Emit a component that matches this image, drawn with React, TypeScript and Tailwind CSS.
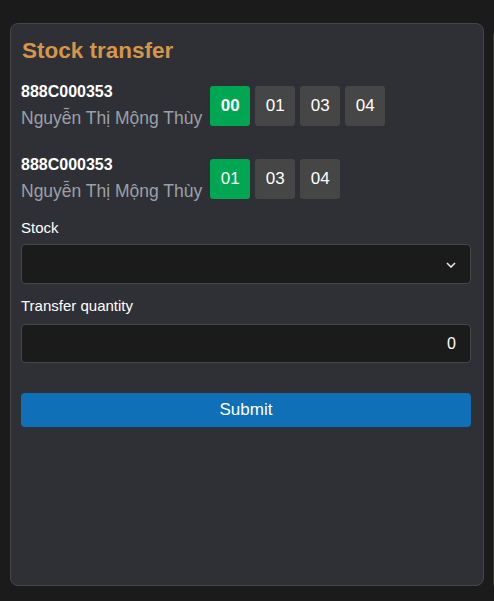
import { useState } from 'react';

type Account = {
  id: string;
  name: string;
  subs: string[];
  bold?: boolean;
};

const accounts: Account[] = [
  { id: '888C000353', name: 'Nguyễn Thị Mộng Thùy', subs: ['00', '01', '03', '04'], bold: true },
  { id: '888C000353', name: 'Nguyễn Thị Mộng Thùy', subs: ['01', '03', '04'] },
];

function AccountRow({ account }: { account: Account }) {
  const [active, setActive] = useState(account.subs[0]);

  return (
    <div className="flex items-center">
      <div className="flex flex-col">
        <div className="text-[16px] leading-[20px] font-bold text-white">{account.id}</div>
        <div className="mt-[4px] text-[17.5px] leading-[24px] text-[#9ba0a8]">{account.name}</div>
      </div>
      <div className="ml-[8px] flex gap-[5px]">
        {account.subs.map((s) => (
          <button
            key={s}
            onClick={() => setActive(s)}
            className={`h-[40px] w-[40px] rounded-[3px] text-[17px] text-white ${
              s === active ? 'bg-[#00a651]' : 'bg-[#464646]'
            } ${s === active && account.bold ? 'font-bold' : ''}`}
          >
            {s}
          </button>
        ))}
      </div>
    </div>
  );
}

export default function App() {
  const [qty, setQty] = useState('0');

  return (
    <div
      className="flex min-h-screen overflow-hidden bg-[#1b1b1b] pl-[10px] pt-[23px]"
      style={{ fontFamily: '"Liberation Sans", Arial, sans-serif' }}
    >
      {/* Panel */}
      <div className="flex h-[563px] w-[474px] shrink-0 flex-col rounded-[8px] border border-[#45464b] bg-[#2f3035] pl-[10px] pr-[12px] pt-[13px]">
        <h2 className="pl-px text-[22.5px] leading-[28px] font-bold text-[#d4964b]">Stock transfer</h2>

        <div className="mt-[17px] flex flex-col gap-[25px]">
          {accounts.map((a, i) => (
            <AccountRow key={i} account={a} />
          ))}
        </div>

        <label className="mt-[15px] text-[15px] leading-[20px] text-white">Stock</label>
        <div className="relative mt-[6px]">
          <select className="h-[40px] w-full appearance-none rounded-[4px] border border-[#46474b] bg-[#1b1b1b] px-[12px] text-[16px] text-white outline-none">
            <option value=""></option>
          </select>
          <svg
            className="pointer-events-none absolute right-[15px] top-[18px]"
            width="10"
            height="6"
            viewBox="0 0 10 6"
            fill="none"
          >
            <path d="M1 1l4 4 4-4" stroke="#e6e6e6" strokeWidth="1.6" />
          </svg>
        </div>

        <label className="mt-[12px] text-[15px] leading-[20px] text-white">Transfer quantity</label>
        <input
          value={qty}
          onChange={(e) => setQty(e.target.value)}
          className="mt-[8px] h-[39px] w-full rounded-[4px] border border-[#46474b] bg-[#1b1b1b] pr-[14px] text-right text-[16px] text-white outline-none"
        />

        <button className="mt-[30px] h-[34px] w-full rounded-[4px] bg-[#0f70b7] text-[17px] text-white">
          Submit
        </button>
      </div>

      {/* Next panel peeking in */}
      <div className="ml-[9px] mt-[5px] h-[563px] w-[200px] shrink-0 rounded-[8px] border border-[#3a3b3f] bg-[#1b1b1b]" />
    </div>
  );
}
